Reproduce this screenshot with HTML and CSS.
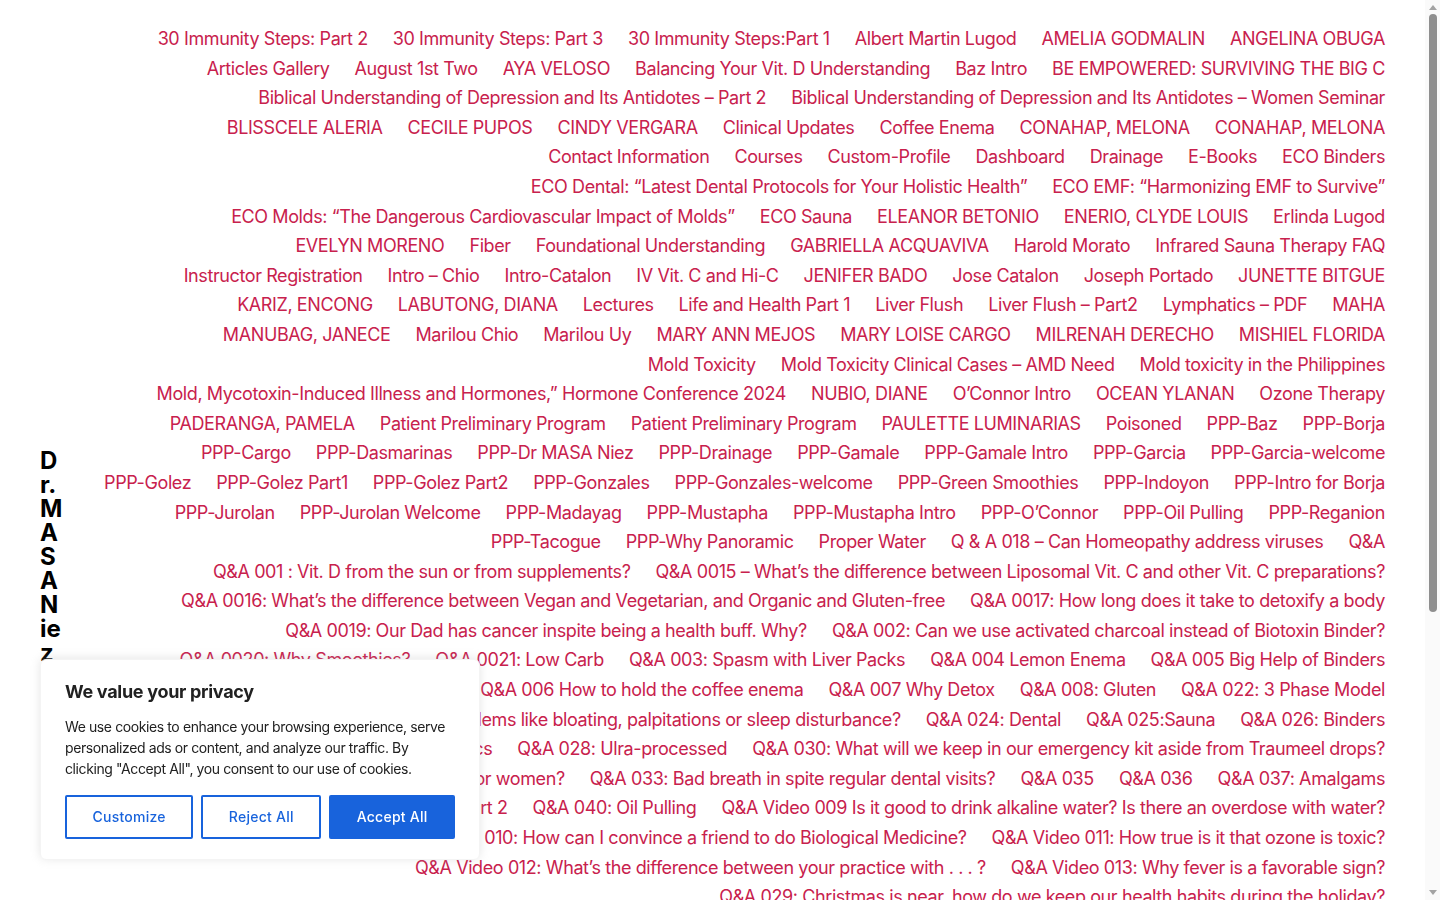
FILE: index.html
```
<!DOCTYPE html>
<html lang="en">
<head>
  <meta charset="UTF-8">
  <meta name="viewport" content="width=device-width, initial-scale=1.0">
  <title>Dr.MASANiez</title>
  <link rel="stylesheet" href="styles.css">
</head>
<body>
  <header class="site-header">
    <a class="site-title" href="#">Dr.MASANiez</a>

    <nav class="page-list">
      <div class="row">
        <a href="#">30 Immunity Steps: Part 2</a>
        <a href="#">30 Immunity Steps: Part 3</a>
        <a href="#">30 Immunity Steps:Part 1</a>
        <a href="#">Albert Martin Lugod</a>
        <a href="#">AMELIA GODMALIN</a>
        <a href="#">ANGELINA OBUGA</a>
      </div>
      <div class="row">
        <a href="#">Articles Gallery</a>
        <a href="#">August 1st Two</a>
        <a href="#">AYA VELOSO</a>
        <a href="#">Balancing Your Vit. D Understanding</a>
        <a href="#">Baz Intro</a>
        <a href="#">BE EMPOWERED: SURVIVING THE BIG C</a>
      </div>
      <div class="row">
        <a href="#">Biblical Understanding of Depression and Its Antidotes – Part 2</a>
        <a href="#">Biblical Understanding of Depression and Its Antidotes – Women Seminar</a>
      </div>
      <div class="row">
        <a href="#">BLISSCELE ALERIA</a>
        <a href="#">CECILE PUPOS</a>
        <a href="#">CINDY VERGARA</a>
        <a href="#">Clinical Updates</a>
        <a href="#">Coffee Enema</a>
        <a href="#">CONAHAP, MELONA</a>
        <a href="#">CONAHAP, MELONA</a>
      </div>
      <div class="row">
        <a href="#">Contact Information</a>
        <a href="#">Courses</a>
        <a href="#">Custom-Profile</a>
        <a href="#">Dashboard</a>
        <a href="#">Drainage</a>
        <a href="#">E-Books</a>
        <a href="#">ECO Binders</a>
      </div>
      <div class="row">
        <a href="#">ECO Dental: “Latest Dental Protocols for Your Holistic Health”</a>
        <a href="#">ECO EMF: “Harmonizing EMF to Survive”</a>
      </div>
      <div class="row">
        <a href="#">ECO Molds: “The Dangerous Cardiovascular Impact of Molds”</a>
        <a href="#">ECO Sauna</a>
        <a href="#">ELEANOR BETONIO</a>
        <a href="#">ENERIO, CLYDE LOUIS</a>
        <a href="#">Erlinda Lugod</a>
      </div>
      <div class="row">
        <a href="#">EVELYN MORENO</a>
        <a href="#">Fiber</a>
        <a href="#">Foundational Understanding</a>
        <a href="#">GABRIELLA ACQUAVIVA</a>
        <a href="#">Harold Morato</a>
        <a href="#">Infrared Sauna Therapy FAQ</a>
      </div>
      <div class="row">
        <a href="#">Instructor Registration</a>
        <a href="#">Intro – Chio</a>
        <a href="#">Intro-Catalon</a>
        <a href="#">IV Vit. C and Hi-C</a>
        <a href="#">JENIFER BADO</a>
        <a href="#">Jose Catalon</a>
        <a href="#">Joseph Portado</a>
        <a href="#">JUNETTE BITGUE</a>
      </div>
      <div class="row">
        <a href="#">KARIZ, ENCONG</a>
        <a href="#">LABUTONG, DIANA</a>
        <a href="#">Lectures</a>
        <a href="#">Life and Health Part 1</a>
        <a href="#">Liver Flush</a>
        <a href="#">Liver Flush – Part2</a>
        <a href="#">Lymphatics – PDF</a>
        <a href="#">MAHA</a>
      </div>
      <div class="row">
        <a href="#">MANUBAG, JANECE</a>
        <a href="#">Marilou Chio</a>
        <a href="#">Marilou Uy</a>
        <a href="#">MARY ANN MEJOS</a>
        <a href="#">MARY LOISE CARGO</a>
        <a href="#">MILRENAH DERECHO</a>
        <a href="#">MISHIEL FLORIDA</a>
      </div>
      <div class="row">
        <a href="#">Mold Toxicity</a>
        <a href="#">Mold Toxicity Clinical Cases – AMD Need</a>
        <a href="#">Mold toxicity in the Philippines</a>
      </div>
      <div class="row">
        <a href="#">Mold, Mycotoxin-Induced Illness and Hormones,” Hormone Conference 2024</a>
        <a href="#">NUBIO, DIANE</a>
        <a href="#">O’Connor Intro</a>
        <a href="#">OCEAN YLANAN</a>
        <a href="#">Ozone Therapy</a>
      </div>
      <div class="row">
        <a href="#">PADERANGA, PAMELA</a>
        <a href="#">Patient Preliminary Program</a>
        <a href="#">Patient Preliminary Program</a>
        <a href="#">PAULETTE LUMINARIAS</a>
        <a href="#">Poisoned</a>
        <a href="#">PPP-Baz</a>
        <a href="#">PPP-Borja</a>
      </div>
      <div class="row">
        <a href="#">PPP-Cargo</a>
        <a href="#">PPP-Dasmarinas</a>
        <a href="#">PPP-Dr MASA Niez</a>
        <a href="#">PPP-Drainage</a>
        <a href="#">PPP-Gamale</a>
        <a href="#">PPP-Gamale Intro</a>
        <a href="#">PPP-Garcia</a>
        <a href="#">PPP-Garcia-welcome</a>
      </div>
      <div class="row">
        <a href="#">PPP-Golez</a>
        <a href="#">PPP-Golez Part1</a>
        <a href="#">PPP-Golez Part2</a>
        <a href="#">PPP-Gonzales</a>
        <a href="#">PPP-Gonzales-welcome</a>
        <a href="#">PPP-Green Smoothies</a>
        <a href="#">PPP-Indoyon</a>
        <a href="#">PPP-Intro for Borja</a>
      </div>
      <div class="row">
        <a href="#">PPP-Jurolan</a>
        <a href="#">PPP-Jurolan Welcome</a>
        <a href="#">PPP-Madayag</a>
        <a href="#">PPP-Mustapha</a>
        <a href="#">PPP-Mustapha Intro</a>
        <a href="#">PPP-O’Connor</a>
        <a href="#">PPP-Oil Pulling</a>
        <a href="#">PPP-Reganion</a>
      </div>
      <div class="row">
        <a href="#">PPP-Tacogue</a>
        <a href="#">PPP-Why Panoramic</a>
        <a href="#">Proper Water</a>
        <a href="#">Q &amp; A 018 – Can Homeopathy address viruses</a>
        <a href="#">Q&amp;A</a>
      </div>
      <div class="row">
        <a href="#">Q&amp;A 001 : Vit. D from the sun or from supplements?</a>
        <a href="#">Q&amp;A 0015 – What’s the difference between Liposomal Vit. C and other Vit. C preparations?</a>
      </div>
      <div class="row">
        <a href="#">Q&amp;A 0016: What’s the difference between Vegan and Vegetarian, and Organic and Gluten-free</a>
        <a href="#">Q&amp;A 0017: How long does it take to detoxify a body</a>
      </div>
      <div class="row">
        <a href="#">Q&amp;A 0019: Our Dad has cancer inspite being a health buff. Why?</a>
        <a href="#">Q&amp;A 002: Can we use activated charcoal instead of Biotoxin Binder?</a>
      </div>
      <div class="row">
        <a href="#">Q&amp;A 0020: Why Smoothies?</a>
        <a href="#">Q&amp;A 0021: Low Carb</a>
        <a href="#">Q&amp;A 003: Spasm with Liver Packs</a>
        <a href="#">Q&amp;A 004 Lemon Enema</a>
        <a href="#">Q&amp;A 005 Big Help of Binders</a>
      </div>
      <div class="row">
        <a href="#">Q&amp;A 006 How to hold the coffee enema</a>
        <a href="#">Q&amp;A 007 Why Detox</a>
        <a href="#">Q&amp;A 008: Gluten</a>
        <a href="#">Q&amp;A 022: 3 Phase Model</a>
      </div>
      <div class="row">
        <a href="#">Q&amp;A 023: Digestive problems like bloating, palpitations or sleep disturbance?</a>
        <a href="#">Q&amp;A 024: Dental</a>
        <a href="#">Q&amp;A 025:Sauna</a>
        <a href="#">Q&amp;A 026: Binders</a>
      </div>
      <div class="row">
        <a href="#">Q&amp;A 027: Probiotics</a>
        <a href="#">Q&amp;A 028: Ulra-processed</a>
        <a href="#">Q&amp;A 030: What will we keep in our emergency kit aside from Traumeel drops?</a>
      </div>
      <div class="row">
        <a href="#">Q&amp;A 032: Same protocol for men or women?</a>
        <a href="#">Q&amp;A 033: Bad breath in spite regular dental visits?</a>
        <a href="#">Q&amp;A 035</a>
        <a href="#">Q&amp;A 036</a>
        <a href="#">Q&amp;A 037: Amalgams</a>
      </div>
      <div class="row">
        <a href="#">Q&amp;A 038: Amalgams Part 2</a>
        <a href="#">Q&amp;A 040: Oil Pulling</a>
        <a href="#">Q&amp;A Video 009 Is it good to drink alkaline water? Is there an overdose with water?</a>
      </div>
      <div class="row">
        <a href="#">Q&amp;A Video 010: How can I convince a friend to do Biological Medicine?</a>
        <a href="#">Q&amp;A Video 011: How true is it that ozone is toxic?</a>
      </div>
      <div class="row">
        <a href="#">Q&amp;A Video 012: What’s the difference between your practice with . . . ?</a>
        <a href="#">Q&amp;A Video 013: Why fever is a favorable sign?</a>
      </div>
      <div class="row">
        <a href="#">Q&amp;A 029: Christmas is near, how do we keep our health habits during the holiday?</a>
      </div>
    </nav>
  </header>

  <main class="site-main"></main>

  <div class="cookie-box">
    <p class="cookie-title">We value your privacy</p>
    <p class="cookie-text">We use cookies to enhance your browsing experience, serve personalized ads or content, and analyze our traffic. By clicking "Accept All", you consent to our use of cookies.</p>
    <div class="cookie-buttons">
      <button class="btn btn-outline">Customize</button>
      <button class="btn btn-outline">Reject All</button>
      <button class="btn btn-solid">Accept All</button>
    </div>
  </div>

  <!-- window scrollbar, as seen in the capture -->
  <div class="scrollbar" aria-hidden="true">
    <span class="scroll-arrow up"></span>
    <span class="scroll-track"><span class="scroll-thumb"></span></span>
    <span class="scroll-arrow down"></span>
  </div>
</body>
</html>
```

FILE: styles.css
```
body {
  margin: 0;
  font-family: Inter, "Noto Sans", sans-serif;
  background: #fff;
  color: #000;
}

.site-header {
  display: flex;
  align-items: flex-start;
  gap: 24px;
  padding: 28px 55px 0 40px;
}

.site-title {
  flex: 0 0 22px;
  width: 22px;
  margin-top: 421px;
  font-size: 24px;
  line-height: 24px;
  font-weight: 700;
  color: #000;
  text-decoration: none;
  word-break: break-all;
}

.page-list {
  flex: 1;
  display: flex;
  flex-direction: column;
  gap: 8px;
}

.page-list .row {
  display: flex;
  justify-content: flex-end;
  gap: 25px;
  white-space: nowrap;
}

.page-list a {
  color: #c8214d;
  text-decoration: none;
  font-size: 18px;
  line-height: 1.2;
  letter-spacing: -0.4px;
}

.site-main {
  min-height: 360px;
}

/* cookie consent */
.cookie-box {
  position: fixed;
  left: 40px;
  bottom: 40px;
  width: 440px;
  box-sizing: border-box;
  padding: 20px 24px;
  background: #fff;
  border: 1px solid #f4f4f4;
  border-radius: 6px;
  box-shadow: 0 -1px 10px 0 rgba(172, 171, 171, 0.3);
  color: #212121;
}

.cookie-title {
  margin: 0 0 12px 0;
  font-size: 18px;
  line-height: 24px;
  font-weight: 700;
  letter-spacing: -0.3px;
}

.cookie-text {
  margin: 0;
  font-size: 14px;
  line-height: 21px;
  letter-spacing: -0.4px;
}

.cookie-buttons {
  display: flex;
  gap: 8px;
  margin-top: 16px;
}

.btn {
  flex: auto;
  padding: 8px 20px;
  border: 2px solid #1863dc;
  border-radius: 2px;
  font-family: Inter, sans-serif;
  font-size: 14px;
  line-height: 24px;
  font-weight: 500;
  letter-spacing: 0.25px;
  cursor: pointer;
}

.btn-outline {
  background: transparent;
  color: #1863dc;
}

.btn-solid {
  background: #1863dc;
  color: #fff;
}

/* scrollbar */
.scrollbar {
  position: fixed;
  top: 0;
  right: 0;
  bottom: 0;
  width: 15px;
  display: flex;
  flex-direction: column;
  align-items: center;
  background: #fafafa;
}

.scroll-arrow {
  width: 0;
  height: 0;
}

.scroll-arrow.up {
  margin-top: 5px;
  border-left: 4px solid transparent;
  border-right: 4px solid transparent;
  border-bottom: 5px solid #a3a3a3;
}

.scroll-arrow.down {
  margin-bottom: 5px;
  border-left: 4px solid transparent;
  border-right: 4px solid transparent;
  border-top: 5px solid #a3a3a3;
}

.scroll-track {
  flex: 1;
  width: 100%;
  display: flex;
  justify-content: center;
  padding: 4px 0;
}

.scroll-thumb {
  width: 8px;
  height: 598px;
  border-radius: 4px;
  background: #8f8f8f;
}
```
